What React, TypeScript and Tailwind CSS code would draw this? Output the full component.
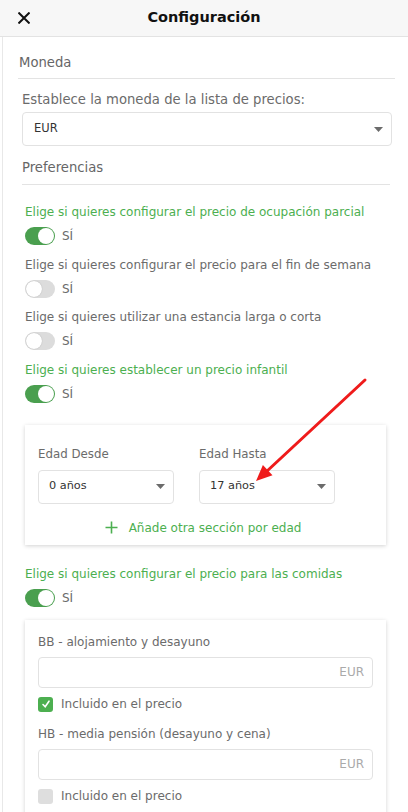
import React from "react";

const font = { fontFamily: '"DejaVu Sans", "Noto Sans", sans-serif' };

function Caret() {
  return (
    <svg width="9" height="5" viewBox="0 0 9 5" className="shrink-0">
      <path d="M0 0 L9 0 L4.5 5 Z" fill="#6b6b6b" />
    </svg>
  );
}

function Toggle({ on }: { on: boolean }) {
  return on ? (
    <div className="w-[30px] h-[18px] rounded-full bg-[#4a9f4f] flex items-center justify-end pr-[1px]">
      <div className="w-[16px] h-[16px] rounded-full bg-white" />
    </div>
  ) : (
    <div className="w-[30px] h-[18px] rounded-full bg-[#dcdcdc] flex items-center pl-[1px]">
      <div className="w-[16px] h-[16px] rounded-full bg-white shadow-[0_0_1px_rgba(0,0,0,0.3)]" />
    </div>
  );
}

function PrefRow({ label, green, on }: { label: string; green: boolean; on: boolean }) {
  return (
    <div className="flex flex-col">
      <div className={`text-[12px] leading-[18px] ${green ? "text-[#4caf50]" : "text-[#6b6b6b]"}`}>{label}</div>
      <div className="flex items-center gap-[7px] mt-[6px]">
        <Toggle on={on} />
        <span className="text-[12px] text-[#6b6b6b] leading-[18px]">SÍ</span>
      </div>
    </div>
  );
}

function AgeSelect({ value }: { value: string }) {
  return (
    <div className="w-[136px] h-[34px] border border-[#e2e2e2] rounded-[4px] flex items-center justify-between pl-[10px] pr-[8px]">
      <span className="text-[11.3px] text-[#333]">{value}</span>
      <Caret />
    </div>
  );
}

function Meal({ label, checked }: { label: string; checked: boolean }) {
  return (
    <div className="flex flex-col">
      <div className="text-[12px] leading-[18px] text-[#6b6b6b]">{label}</div>
      <div className="mt-[6px] h-[31px] border border-[#e2e2e2] rounded-[4px] flex items-center justify-end pr-[8px]">
        <span className="text-[12px] text-[#aaa]">EUR</span>
      </div>
      <div className="flex items-center gap-[8px] mt-[9px]">
        {checked ? (
          <div className="w-[15px] h-[15px] rounded-[3px] bg-[#4caf50] flex items-center justify-center">
            <svg width="10" height="10" viewBox="0 0 10 10">
              <path d="M2 5.5 L4.2 7.8 L8 2.2" stroke="white" strokeWidth="1.6" fill="none" strokeLinecap="round" />
            </svg>
          </div>
        ) : (
          <div className="w-[15px] h-[15px] rounded-[3px] bg-[#dedede]" />
        )}
        <span className="text-[12px] text-[#6b6b6b] leading-[15px]">Incluido en el precio</span>
      </div>
    </div>
  );
}

export default function App() {
  return (
    <div className="relative w-[408px] h-[812px] overflow-hidden bg-white" style={font}>
      <div className="h-[37px] bg-[#f7f7f7] border-b border-[#e3e3e3] grid grid-cols-[48px_1fr_48px] items-center">
        <div className="pl-[18px] flex items-center">
          <svg width="12" height="12" viewBox="0 0 12 12">
            <path d="M1.2 1.2 L10.8 10.8 M10.8 1.2 L1.2 10.8" stroke="#111" strokeWidth="2" strokeLinecap="square" />
          </svg>
        </div>
        <div className="text-center text-[14.5px] font-bold text-[#111]">Configuración</div>
        <div />
      </div>

      <div className="ml-[2px] border-l border-[#e8e8e8] h-[775px] flex flex-col">
        <div className="pl-[15px] pr-[13px] pt-[15px]">
          <div className="text-[13.2px] leading-[20px] text-[#666] font-medium pl-[1px] translate-y-[1px]">Moneda</div>
          <div className="mt-[6px] border-b border-[#e3e3e3]" />
        </div>
        <div className="pl-[19px] pr-[16px]">
          <div className="mt-[11px] text-[13.2px] leading-[20px] text-[#6b6b6b]">Establece la moneda de la lista de precios:</div>
          <div className="mt-[2px] h-[34px] border border-[#e2e2e2] rounded-[4px] flex items-center justify-between pl-[11px] pr-[8px]">
            <span className="text-[11.5px] text-[#333]">EUR</span>
            <Caret />
          </div>
          <div className="mt-[12px] text-[13.2px] leading-[20px] text-[#666] font-medium">Preferencias</div>
          <div className="mt-[6px] border-b border-[#e3e3e3] mr-[2px]" />
        </div>

        <div className="pl-[22px] pr-[22px] flex flex-col">
          <div className="mt-[18px] flex flex-col gap-[10.5px]">
            <PrefRow label="Elige si quieres configurar el precio de ocupación parcial" green on />
            <PrefRow label="Elige si quieres configurar el precio para el fin de semana" green={false} on={false} />
            <PrefRow label="Elige si quieres utilizar una estancia larga o corta" green={false} on={false} />
            <PrefRow label="Elige si quieres establecer un precio infantil" green on />
          </div>

          <div className="mt-[22px] h-[120px] bg-white shadow-[0_1px_4px_rgba(0,0,0,0.18)] px-[13px] pt-[20px] flex flex-col">
            <div className="flex gap-[25px]">
              <div className="flex flex-col gap-[7px]">
                <div className="text-[11.8px] leading-[18px] text-[#6b6b6b]">Edad Desde</div>
                <AgeSelect value="0 años" />
              </div>
              <div className="flex flex-col gap-[7px]">
                <div className="text-[11.8px] leading-[18px] text-[#6b6b6b]">Edad Hasta</div>
                <AgeSelect value="17 años" />
              </div>
            </div>
            <div className="mt-[15px] flex items-center justify-center gap-[11px] pr-[5px]">
              <svg width="13" height="13" viewBox="0 0 13 13">
                <path d="M6.5 0.5 V12.5 M0.5 6.5 H12.5" stroke="#4caf50" strokeWidth="1.6" />
              </svg>
              <span className="text-[12px] leading-[18px] text-[#4caf50]">Añade otra sección por edad</span>
            </div>
          </div>

          <div className="mt-[20px]">
            <PrefRow label="Elige si quieres configurar el precio para las comidas" green on />
          </div>

          <div className="mt-[13px] bg-white shadow-[0_1px_4px_rgba(0,0,0,0.18)] px-[13px] pt-[13px] pb-[12px] flex flex-col gap-[13px]">
            <Meal label="BB - alojamiento y desayuno" checked />
            <Meal label="HB - media pensión (desayuno y cena)" checked={false} />
          </div>
        </div>
      </div>

      <svg className="absolute left-0 top-0 pointer-events-none" width="408" height="812" viewBox="0 0 408 812">
        <line x1="365" y1="380" x2="266" y2="472" stroke="#ef1b1b" strokeWidth="3" strokeLinecap="round" />
        <polygon points="256,481 272.5,475.2 262.9,465" fill="#ef1b1b" />
      </svg>
    </div>
  );
}
